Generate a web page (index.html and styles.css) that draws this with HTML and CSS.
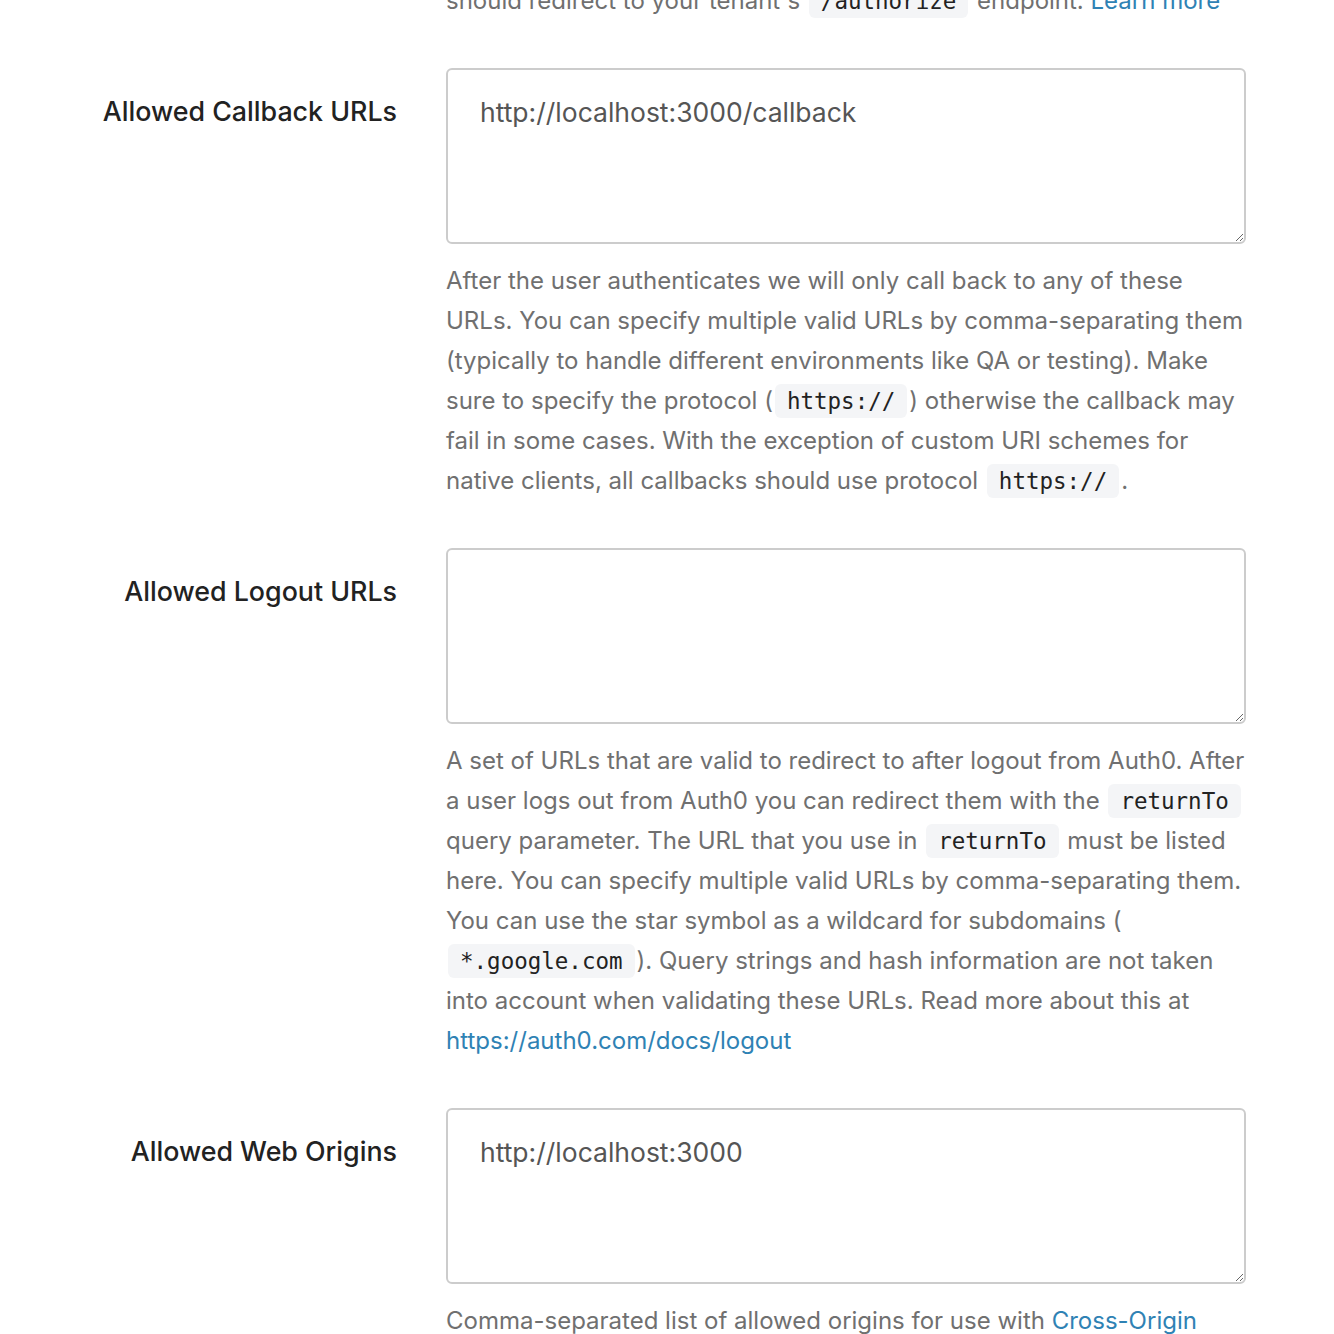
FILE: index.html
```html
<!DOCTYPE html>
<html lang="en">
<head>
<meta charset="utf-8">
<title>Application URIs</title>
<link rel="stylesheet" href="styles.css">
</head>
<body>
<div class="settings">
  <div class="field field-tail">
    <div class="label-col"></div>
    <div class="control-col">
      <p class="help">should redirect to your tenant's <code>/authorize</code> endpoint. <a href="#">Learn more</a></p>
    </div>
  </div>

  <div class="field">
    <label class="label-col" for="cb">Allowed Callback URLs</label>
    <div class="control-col">
      <textarea id="cb" class="input">http://localhost:3000/callback</textarea>
      <p class="help">After the user authenticates we will only call back to any of these<br>URLs. You can specify multiple valid URLs by comma-separating them<br>(typically to handle different environments like QA or testing). Make<br>sure to specify the protocol (<code>https://</code>) otherwise the callback may<br>fail in some cases. With the exception of custom URI schemes for<br>native clients, all callbacks should use protocol <code>https://</code>.</p>
    </div>
  </div>

  <div class="field">
    <label class="label-col" for="lo">Allowed Logout URLs</label>
    <div class="control-col">
      <textarea id="lo" class="input"></textarea>
      <p class="help">A set of URLs that are valid to redirect to after logout from Auth0. After<br>a user logs out from Auth0 you can redirect them with the <code>returnTo</code><br>query parameter. The URL that you use in <code>returnTo</code> must be listed<br>here. You can specify multiple valid URLs by comma-separating them.<br>You can use the star symbol as a wildcard for subdomains (<br><code>*.google.com</code>). Query strings and hash information are not taken<br>into account when validating these URLs. Read more about this at<br><a href="#">https://auth0.com/docs/logout</a></p>
    </div>
  </div>

  <div class="field">
    <label class="label-col" for="wo">Allowed Web Origins</label>
    <div class="control-col">
      <textarea id="wo" class="input">http://localhost:3000</textarea>
      <p class="help">Comma-separated list of allowed origins for use with <a href="#">Cross-Origin</a></p>
    </div>
  </div>
</div>
</body>
</html>
```

FILE: styles.css
```css
* { box-sizing: border-box; }

html, body {
  margin: 0;
  padding: 0;
  background: #ffffff;
  overflow: hidden;
}

body {
  font-family: "Inter", "Liberation Sans", sans-serif;
  color: #666666;
}

.settings {
  margin-top: -19px;
  display: flex;
  flex-direction: column;
  row-gap: 47px;
}

.field {
  display: grid;
  grid-template-columns: 397px 800px;
  column-gap: 49px;
  align-items: start;
}

.label-col {
  text-align: right;
  font-size: 26.8px;
  font-weight: 500;
  color: #222222;
  line-height: 36px;
  padding-top: 25px;
}

.field-tail .label-col { padding: 0; }

.control-col {
  display: flex;
  flex-direction: column;
}

.input {
  display: block;
  width: 800px;
  height: 176px;
  border: 2px solid #cccccc;
  border-radius: 6px;
  padding: 23px 32px 24px;
  font-family: inherit;
  font-size: 26.5px;
  line-height: 38px;
  color: #555555;
  background: #ffffff;
  resize: vertical;
  outline: none;
}

.help {
  margin: 17px 0 0;
  font-size: 24px;
  line-height: 40px;
  color: #707070;
  white-space: nowrap;
}

.field-tail .help { margin: 0; }

.help code {
  font-family: "DejaVu Sans Mono", "Liberation Mono", monospace;
  font-size: 22.5px;
  line-height: 1;
  color: #222222;
  background: #f4f5f7;
  border-radius: 6px;
  padding: 4px 12px;
  margin: 0 2px;
}

.help a {
  color: #2f82b4;
  text-decoration: none;
}
```
